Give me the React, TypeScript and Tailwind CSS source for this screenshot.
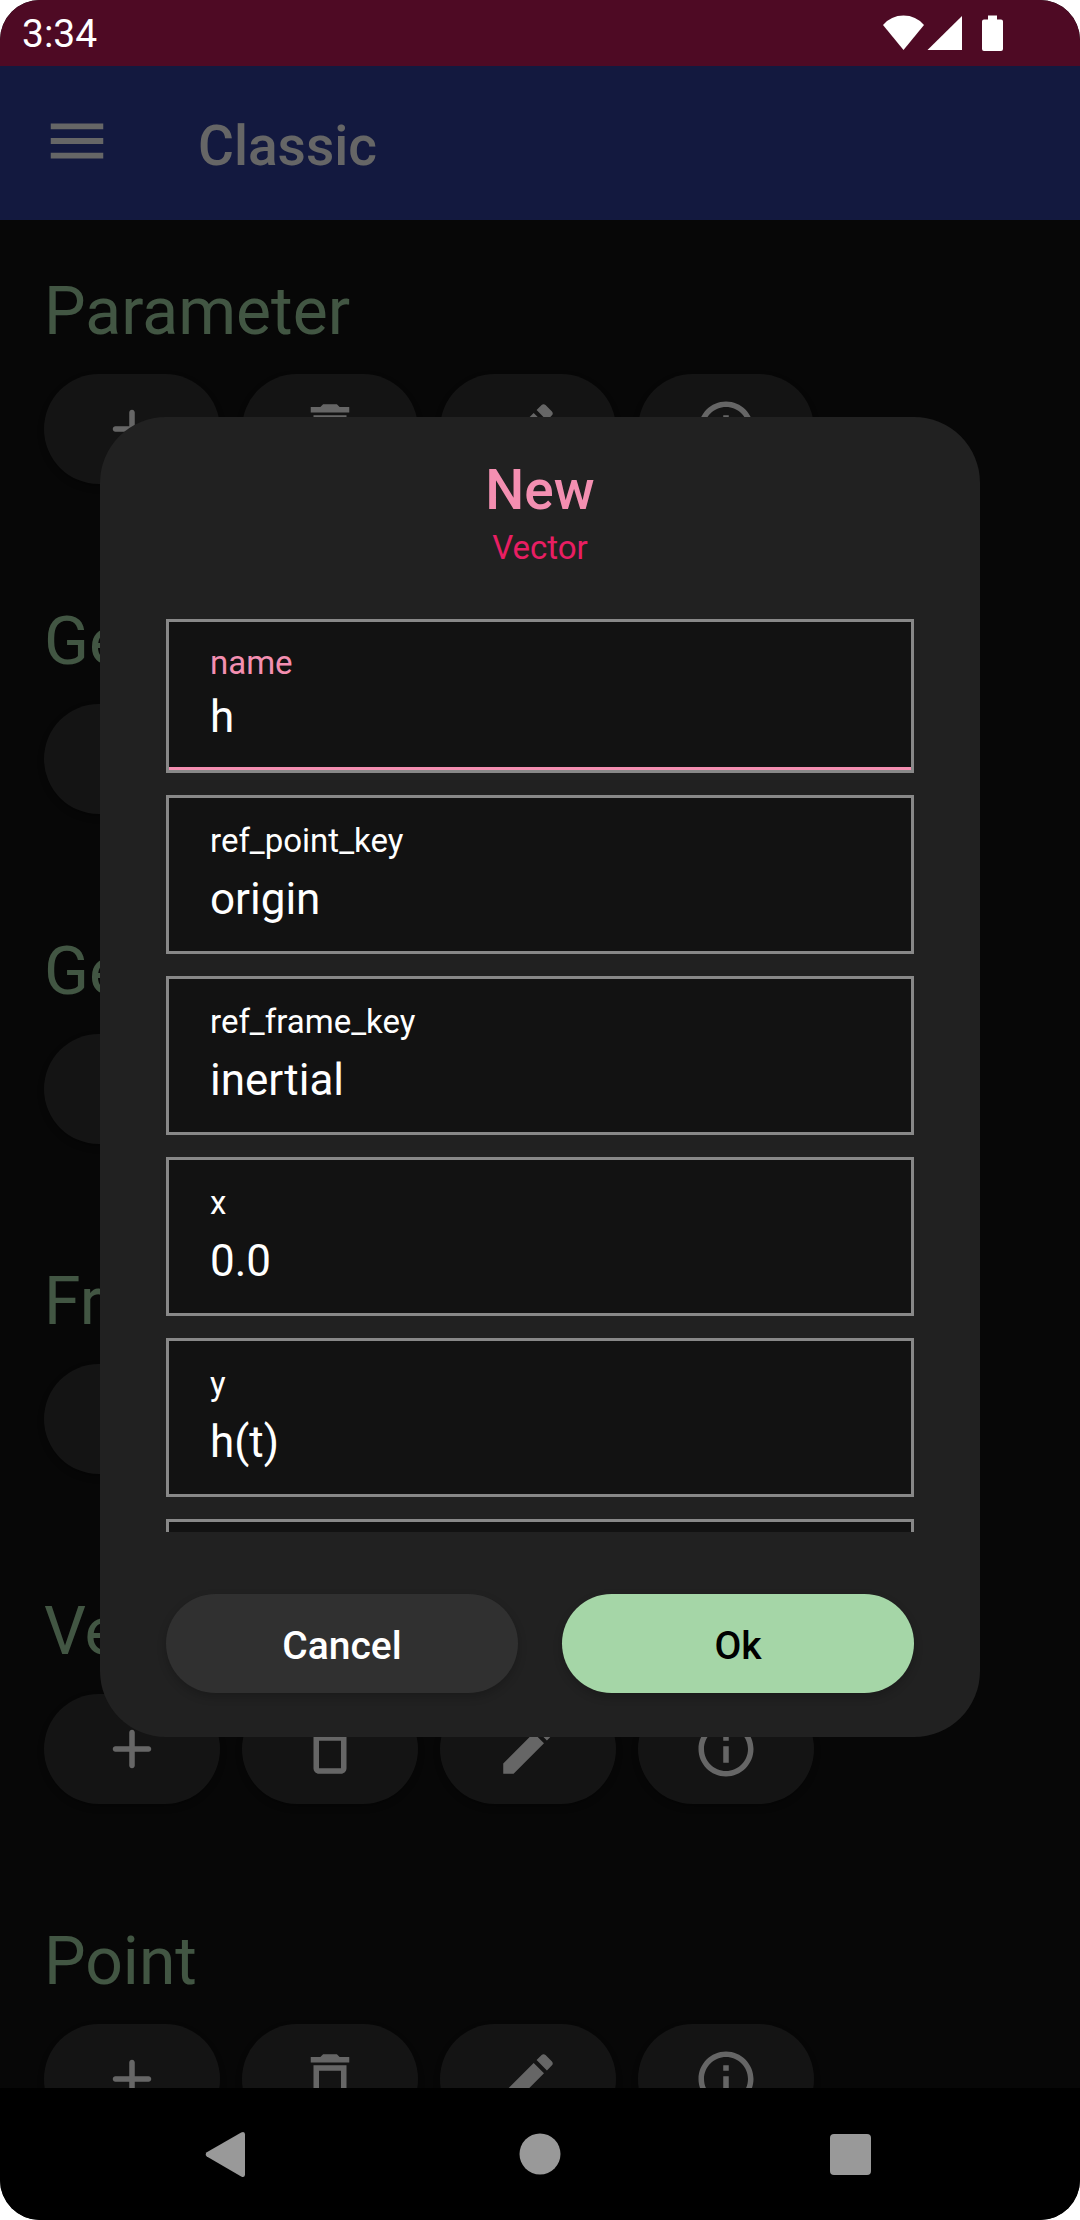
import { useId } from "react";

const ICONS = {
  menu: "M3 18h18v-2H3v2zm0-5h18v-2H3v2zm0-7v2h18V6H3z",
  add: "M18 13h-5v5c0 .55-.45 1-1 1s-1-.45-1-1v-5H6c-.55 0-1-.45-1-1s.45-1 1-1h5V6c0-.55.45-1 1-1s1 .45 1 1v5h5c.55 0 1 .45 1 1s-.45 1-1 1z",
  remove:
    "M6 19c0 1.1.9 2 2 2h8c1.1 0 2-.9 2-2V7H6v12zM8 9h8v10H8V9zm7.5-5l-1-1h-5l-1 1H5v2h14V4z",
  edit: "M3 17.25V21h3.75L17.81 9.94l-3.75-3.75L3 17.25zM20.71 7.04c.39-.39.39-1.02 0-1.41l-2.34-2.34c-.39-.39-1.02-.39-1.41 0l-1.83 1.83 3.75 3.75 1.83-1.83z",
  info: "M11 7h2v2h-2V7zm0 4h2v6h-2v-6zm1-9C6.48 2 2 6.48 2 12s4.48 10 10 10 10-4.48 10-10S17.52 2 12 2zm0 18c-4.41 0-8-3.59-8-8s3.59-8 8-8 8 3.59 8 8-3.59 8-8 8z",
};

const SECTIONS = [
  { id: "parameter", title: "Parameter" },
  { id: "geometry", title: "Geo" },
  { id: "generalized", title: "Gen" },
  { id: "frame", title: "Frame" },
  { id: "vector", title: "Vector" },
  { id: "point", title: "Point" },
];

const ACTIONS = [
  { label: "Add", icon: ICONS.add },
  { label: "Delete", icon: ICONS.remove },
  { label: "Edit", icon: ICONS.edit },
  { label: "Info", icon: ICONS.info },
];

const FIELDS = [
  { label: "ref_point_key", value: "origin" },
  { label: "ref_frame_key", value: "inertial" },
  { label: "x", value: "0.0" },
  { label: "y", value: "h(t)" },
  { label: "z", value: "0.0" },
];

function Icon({ path, className }: { path: string; className: string }) {
  return (
    <svg viewBox="0 0 24 24" fill="currentColor" className={className} aria-hidden="true">
      <path d={path} />
    </svg>
  );
}

function StatusBar() {
  return (
    <div className="flex h-[66px] shrink-0 items-center justify-between bg-[#4e0a24] pr-[76px] pl-[22px] text-white">
      <time className="pt-[2px] text-[39px] leading-[46px]">3:34</time>
      <svg viewBox="0 0 122 38" fill="currentColor" className="h-[38px] w-[122px]" aria-hidden="true">
        <path d="M21.5 36 1 11Q9 1.500 21.500 1.500T42 11Z" />
        <path d="M45.500 36 80 2v34Z" />
        <path d="M106 1.500h9v4h4a2 2 0 0 1 2 2V35a2 2 0 0 1-2 2h-17a2 2 0 0 1-2-2V7.500a2 2 0 0 1 2-2h4Z" />
      </svg>
    </div>
  );
}

function AppBar() {
  return (
    <header className="flex h-[154px] shrink-0 items-center gap-[86px] bg-[#303f9f] px-[42px] text-white">
      <button type="button" aria-label="Open menu" className="pb-1">
        <Icon path={ICONS.menu} className="size-[70px]" />
      </button>
      <h1 className="pt-[6px] text-[55px] leading-[64px] font-medium">Classic</h1>
    </header>
  );
}

function Section({ title }: { title: string }) {
  return (
    <section className="flex flex-col gap-6">
      <h2 className="text-[66px] leading-[77px] text-[#a5d6a7]">{title}</h2>
      <div className="flex gap-[22px]">
        {ACTIONS.map((action) => (
          <button
            key={action.label}
            type="button"
            aria-label={`${action.label} ${title}`}
            className="flex h-[110px] w-[176px] items-center justify-center rounded-full bg-[#333333] text-white shadow-[0_3px_6px_rgba(0,0,0,0.3)]"
          >
            <Icon path={action.icon} className="size-[66px]" />
          </button>
        ))}
      </div>
    </section>
  );
}

function FocusedField({ label, value }: { label: string; value: string }) {
  const id = useId();
  return (
    <div className="flex shrink-0 flex-col gap-[9px] border-[3px] border-[#888888] bg-[#121212] px-[41px] pt-[21px] pb-[27px] shadow-[inset_0_-3px_0_#f48fb1]">
      <label htmlFor={id} className="text-[33px] leading-[39px] text-[#f48fb1]">
        {label}
      </label>
      <input
        id={id}
        defaultValue={value}
        className="h-[52px] w-full bg-transparent text-[44px] leading-[52px] text-white outline-none"
      />
    </div>
  );
}

function Field({ label, value }: { label: string; value: string }) {
  const id = useId();
  return (
    <div className="flex shrink-0 flex-col gap-[13px] border-[3px] border-[#888888] bg-[#121212] px-[41px] pt-[23px] pb-[26px]">
      <label htmlFor={id} className="text-[33px] leading-[39px] text-white">
        {label}
      </label>
      <input
        id={id}
        defaultValue={value}
        className="h-[52px] w-full bg-transparent text-[44px] leading-[52px] text-white outline-none"
      />
    </div>
  );
}

function NewVectorDialog() {
  return (
    <div
      role="dialog"
      aria-modal="true"
      aria-labelledby="dialog-title"
      className="w-full rounded-[66px] bg-[#212121] px-[66px] pt-[41px] pb-11"
    >
      <div className="flex flex-col items-center gap-[6px]">
        <h2 id="dialog-title" className="text-[55px] leading-[64px] font-medium text-[#f48fb1]">
          New
        </h2>
        <p className="text-[33px] leading-[39px] text-[#e91e63]">Vector</p>
      </div>
      <div className="mt-[52px] flex max-h-[913px] flex-col gap-[22px] overflow-y-auto [scrollbar-width:none]">
        <FocusedField label="name" value="h" />
        {FIELDS.map((field) => (
          <Field key={field.label} label={field.label} value={field.value} />
        ))}
      </div>
      <div className="mt-[62px] grid grid-cols-2 gap-11 text-[39px] leading-[46px] font-medium">
        <button
          type="button"
          className="rounded-full bg-[#303030] pt-[29px] pb-[24px] text-white shadow-[0_4px_10px_rgba(0,0,0,0.2)]"
        >
          Cancel
        </button>
        <button
          type="button"
          className="rounded-full bg-[#a5d6a7] pt-[29px] pb-[24px] text-black shadow-[0_4px_10px_rgba(0,0,0,0.2)]"
        >
          Ok
        </button>
      </div>
    </div>
  );
}

function NavigationBar() {
  return (
    <nav className="flex h-[132px] shrink-0 items-center justify-center gap-[244px] bg-black text-[#999999]">
      <button type="button" aria-label="Back">
        <svg viewBox="0 0 66 66" fill="currentColor" className="size-[66px]" aria-hidden="true">
          <path d="M9.800 31.200 44.200 11.400Q48 9.800 48 13.500V53.500Q48 57 44.200 55.400L9.800 35.600Q7.600 33.400 9.800 31.200Z" />
        </svg>
      </button>
      <button type="button" aria-label="Home">
        <svg viewBox="0 0 66 66" fill="currentColor" className="size-[66px]" aria-hidden="true">
          <circle cx="33" cy="33" r="20.500" />
        </svg>
      </button>
      <button type="button" aria-label="Recent apps">
        <svg viewBox="0 0 66 66" fill="currentColor" className="size-[66px]" aria-hidden="true">
          <rect x="13" y="13" width="41" height="41" rx="4" />
        </svg>
      </button>
    </nav>
  );
}

export default function App() {
  return (
    <div className="bg-white">
      <div className="flex h-screen flex-col overflow-hidden rounded-[40px] bg-[#121212] font-[Roboto,sans-serif]">
        <StatusBar />
        <div className="relative flex min-h-0 flex-1 flex-col">
          <AppBar />
          <main className="flex min-h-0 flex-1 flex-col gap-[119px] overflow-hidden px-11 pt-[53px]">
            {SECTIONS.map((section) => (
              <Section key={section.id} title={section.title} />
            ))}
          </main>
          <div className="absolute inset-0 flex items-center bg-black/60 px-[100px]">
            <NewVectorDialog />
          </div>
        </div>
        <NavigationBar />
      </div>
    </div>
  );
}
